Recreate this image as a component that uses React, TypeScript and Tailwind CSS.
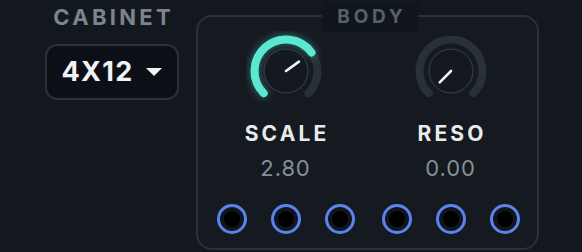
import React from "react";

function polar(deg: number, r: number) {
    const a = (deg * Math.PI) / 180;
    return { x: 40 + r * Math.sin(a), y: 40 - r * Math.cos(a) };
}

function arc(from: number, to: number, r: number) {
    const s = polar(from, r);
    const e = polar(to, r);
    const large = to - from > 180 ? 1 : 0;
    return `M ${s.x} ${s.y} A ${r} ${r} 0 ${large} 1 ${e.x} ${e.y}`;
}

interface KnobProps {
    value: number; // 0..1
}

function Knob({ value }: KnobProps) {
    const angle = -135 + value * 270;
    const tip = polar(angle, 16);
    return (
        <svg width="80" height="80" viewBox="0 0 80 80">
            <path d={arc(-135, 135, 31.5)} fill="none" stroke="#2a3039" strokeWidth="8" strokeLinecap="round" />
            {value > 0 && (
                <path
                    d={arc(-135, angle, 31.5)}
                    fill="none"
                    stroke="#5ae8d3"
                    strokeWidth="8"
                    strokeLinecap="round"
                    className="drop-shadow-[0_0_4px_rgba(90,232,211,0.45)]"
                />
            )}
            <circle cx="40" cy="40" r="22" fill="#141920" stroke="#3a424d" strokeWidth="1" />
            <line x1="40" y1="40" x2={tip.x} y2={tip.y} stroke="#f2f4f5" strokeWidth="2.6" strokeLinecap="round" />
        </svg>
    );
}

function Jack() {
    return (
        <div className="w-[30px] h-[30px] rounded-full border-[3px] border-[#5b83ee] bg-[#12161c] flex items-center justify-center">
            <div className="w-[16px] h-[16px] rounded-full bg-black" />
        </div>
    );
}

function Control({ label, value, amount }: { label: string; value: string; amount: number }) {
    return (
        <div className="w-[165px] flex flex-col items-center">
            <Knob value={amount} />
            <div className="mt-[11px] text-[21px] leading-[24px] font-bold tracking-[0.15em] text-[#e8eaec] pl-[0.15em]">
                {label}
            </div>
            <div className="mt-[9px] text-[22px] leading-[26px] text-[#868e97] tracking-[0.04em]">{value}</div>
            <div className="mt-[23px] flex gap-[24px]">
                <Jack />
                <Jack />
                <Jack />
            </div>
        </div>
    );
}

export default function App() {
    return (
        <div
            className="w-[582px] h-[252px] bg-[#13181f] flex overflow-hidden"
            style={{ fontFamily: "Inter, 'Liberation Sans', sans-serif" }}
        >
            <div className="pl-[45px] pt-[5px] flex flex-col items-center">
                <div className="text-[22px] leading-[24px] font-bold tracking-[0.15em] pl-[0.15em] text-[#7c858f]">
                    CABINET
                </div>
                <button className="mt-[15px] w-[134px] h-[56px] rounded-[12px] border-2 border-[#29313a] bg-[#0c1016] flex items-center justify-center gap-[11px]">
                    <span className="text-[27px] font-bold text-[#f0f2f4] tracking-[0.05em]">4X12</span>
                    <svg width="18" height="10" viewBox="0 0 18 10">
                        <path d="M1 1 L17 1 L9 9 Z" fill="#f0f2f4" />
                    </svg>
                </button>
            </div>
            <div className="relative ml-[17px] mt-[15px] w-[343px] h-[235px] rounded-[16px] border-2 border-[#29313a] bg-[#151a21] pl-[5px] pt-[14px] flex">
                <div className="absolute -top-[15px] left-[124px] w-[96px] h-[30px] bg-[#10151b] flex items-center justify-center">
                    <span className="text-[19px] font-bold tracking-[0.2em] pl-[0.2em] text-[#56606b]">BODY</span>
                </div>
                <Control label="SCALE" value="2.80" amount={0.7} />
                <Control label="RESO" value="0.00" amount={0} />
            </div>
        </div>
    );
}
